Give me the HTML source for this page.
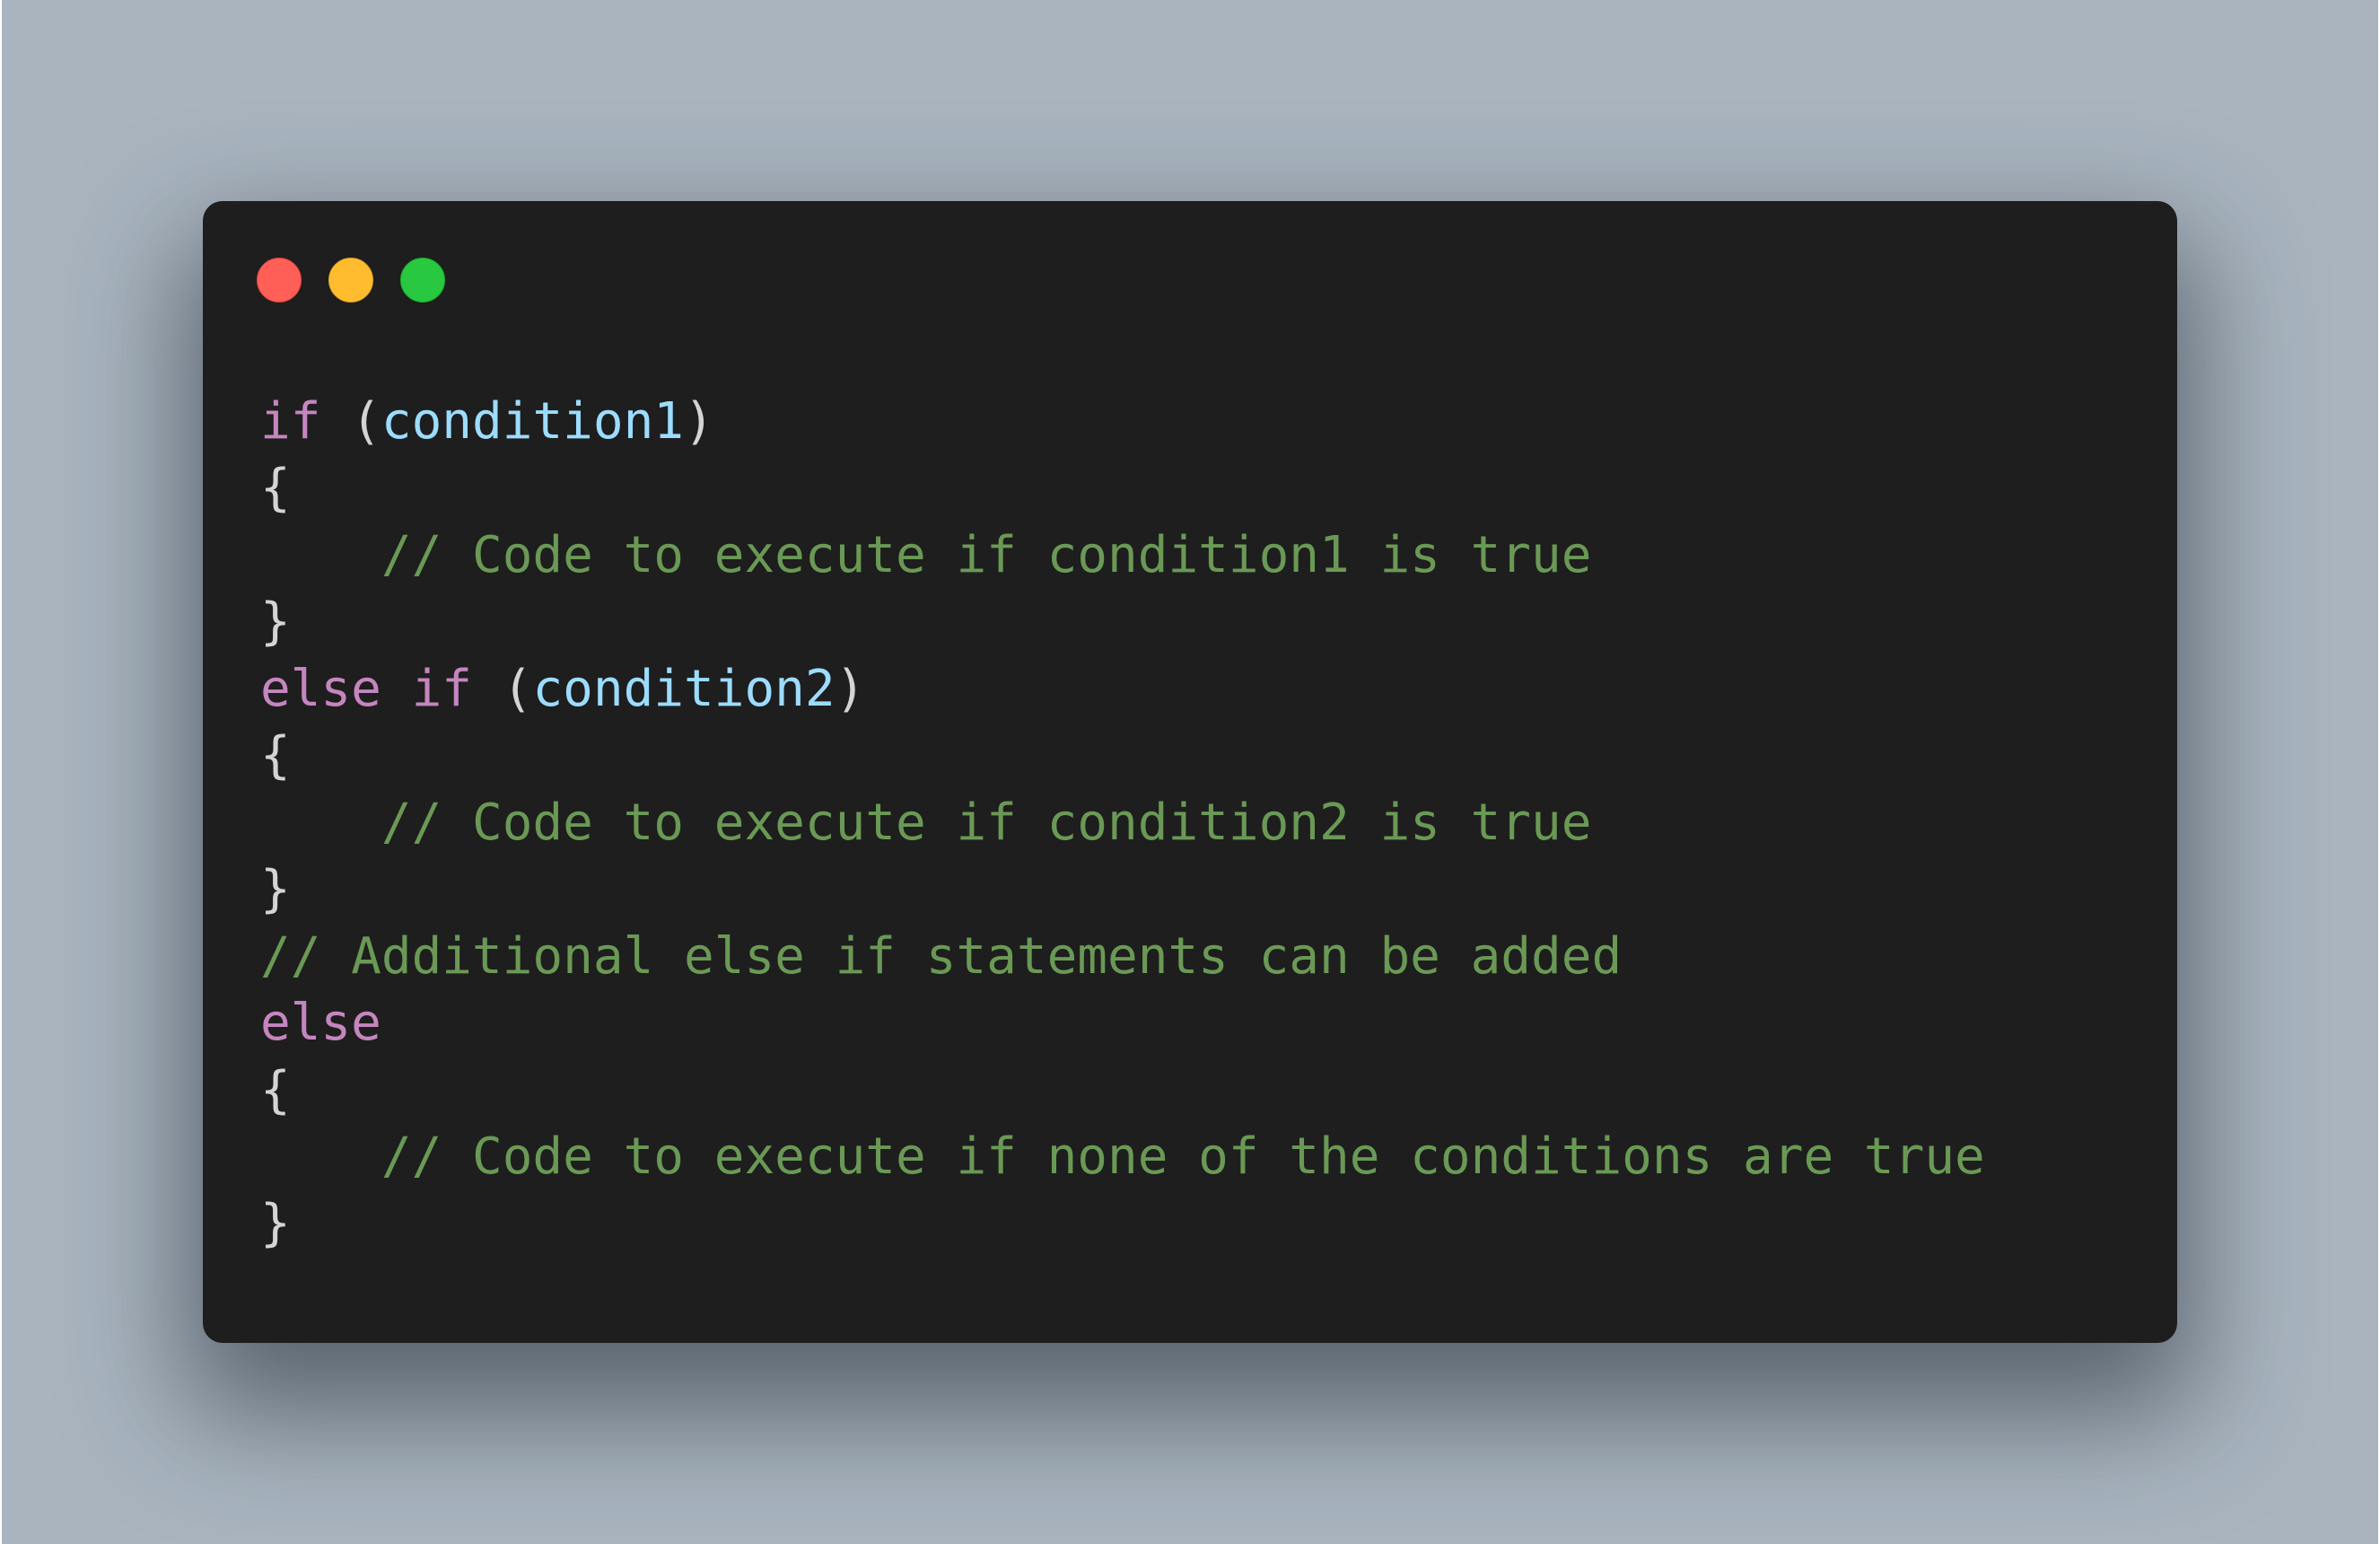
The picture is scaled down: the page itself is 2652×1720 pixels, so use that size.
<!DOCTYPE html>
<html><head><meta charset="utf-8"><style>
html,body{margin:0;padding:0}
body{width:2652px;height:1720px;background:#a9b4bf;position:relative;overflow:hidden;border-left:2px solid #fff;border-right:2px solid #fff;box-sizing:border-box}
.win{position:absolute;left:224px;top:224px;width:2200px;height:1272px;background:#1e1e1e;border-radius:22px;box-shadow:0 60px 150px 20px rgba(40,48,58,0.6)}
.dot{position:absolute;top:63px;width:50px;height:50px;border-radius:50%}
.code{position:absolute;left:64px;top:209px;margin:0;font-family:"DejaVu Sans Mono","Liberation Mono",monospace;font-size:56px;line-height:74.45px;color:#d4d4d4;white-space:pre}
.k{color:#c586c0}.v{color:#9cdcfe}.c{color:#6a9955}
</style></head><body>
<div class="win">
<div class="dot" style="left:60px;background:#ff5f57;border:1px solid #e0443e;box-sizing:border-box"></div>
<div class="dot" style="left:140px;background:#febc2e;border:1px solid #dea123;box-sizing:border-box"></div>
<div class="dot" style="left:220px;background:#28c840;border:1px solid #1aab29;box-sizing:border-box"></div>
<pre class="code"><span class="k">if</span> (<span class="v">condition1</span>)
{
    <span class="c">// Code to execute if condition1 is true</span>
}
<span class="k">else</span> <span class="k">if</span> (<span class="v">condition2</span>)
{
    <span class="c">// Code to execute if condition2 is true</span>
}
<span class="c">// Additional else if statements can be added</span>
<span class="k">else</span>
{
    <span class="c">// Code to execute if none of the conditions are true</span>
}</pre>
</div>
</body></html>
